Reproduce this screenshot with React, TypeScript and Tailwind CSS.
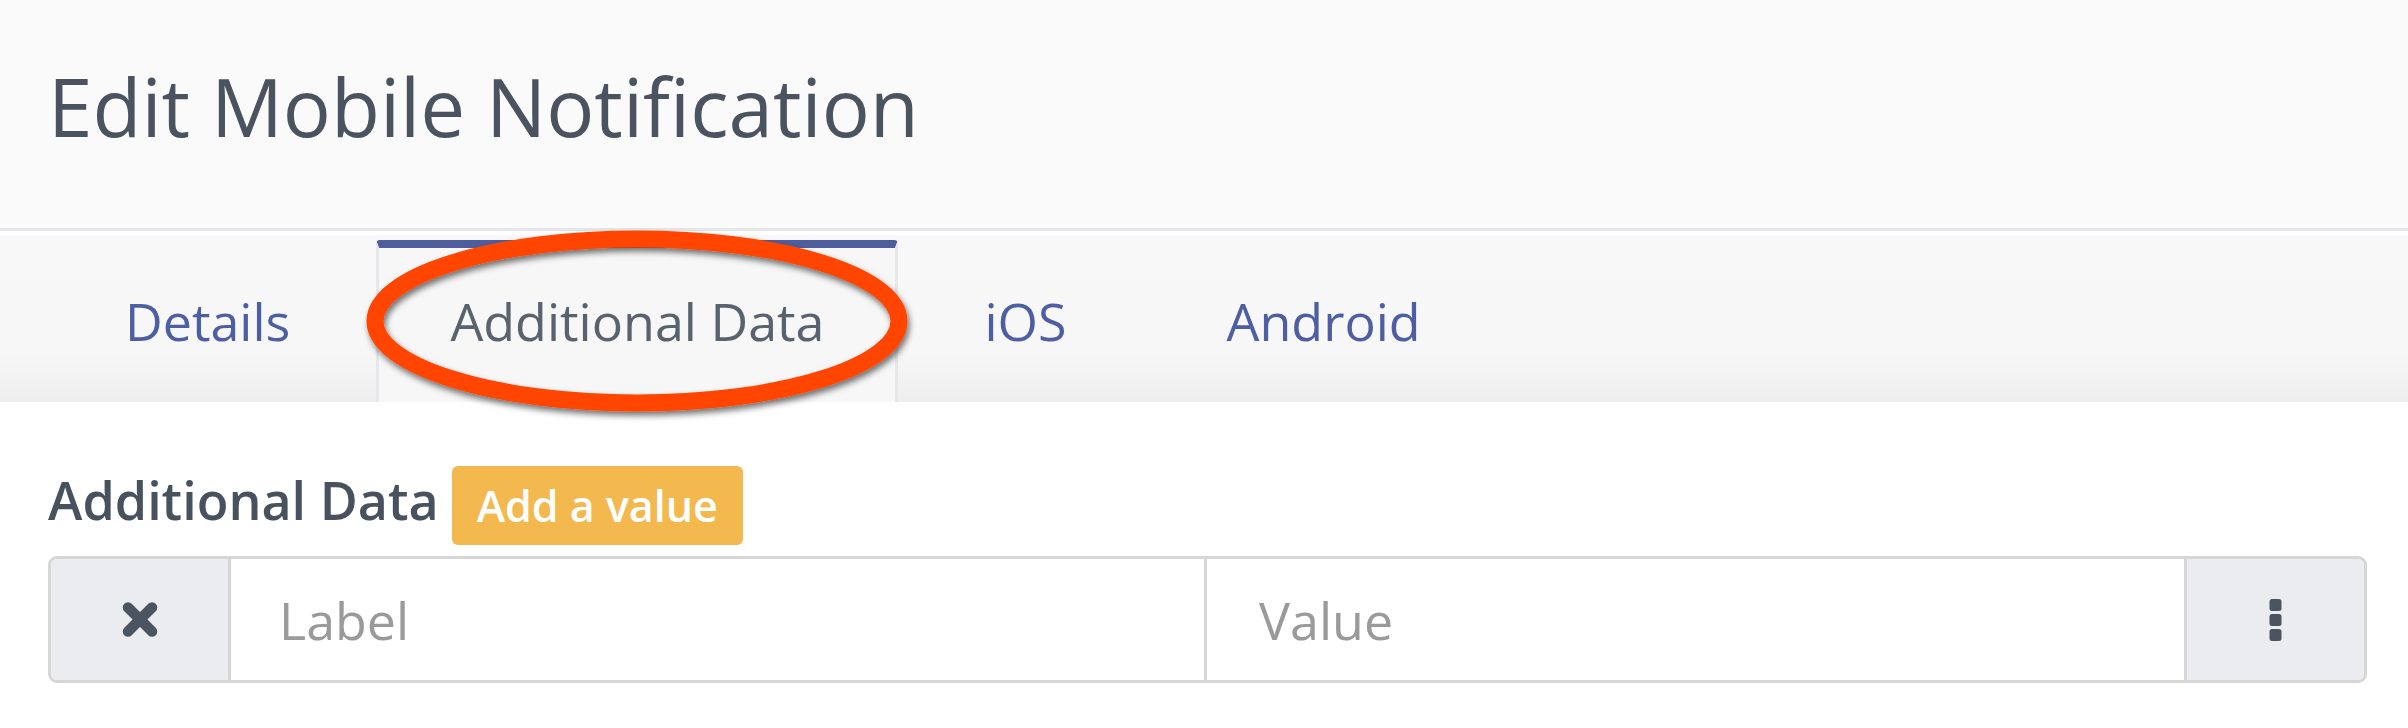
import React from "react";

const tabs = [
  { label: "Details", active: false },
  { label: "Additional Data", active: true },
  { label: "iOS", active: false },
  { label: "Android", active: false },
];

const TimesIcon = () => (
  <svg width="36" height="35" viewBox="0 0 36 35">
    <path
      d="M6 5.5 L30 29.5 M30 5.5 L6 29.5"
      stroke="#4b5461"
      strokeWidth="10.5"
      strokeLinecap="round"
      fill="none"
    />
  </svg>
);

const EllipsisIcon = () => (
  <svg width="13" height="42" viewBox="0 0 13 42">
    <rect x="0.5" y="0" width="12" height="12" rx="2.5" fill="#4b5461" />
    <rect x="0.5" y="15" width="12" height="12" rx="2.5" fill="#4b5461" />
    <rect x="0.5" y="30" width="12" height="12" rx="2.5" fill="#4b5461" />
  </svg>
);

export default function App() {
  return (
    <div className="relative w-[2408px] h-[728px] overflow-hidden bg-white font-['Open_Sans',sans-serif]">
      <header className="h-[231px] bg-[#fafafa] border-b-[3px] border-[#e5e6ea] pl-[48px] pt-[66px]">
        <h1 className="text-[80px] leading-none text-[#4a535f] font-normal">
          Edit Mobile Notification
        </h1>
      </header>
      <div className="h-[4px] bg-white" />
      <nav className="h-[167px] flex items-end gap-[12px] pl-[51px] bg-linear-to-b from-[#f8f8f8] via-[#f7f7f7] via-70% to-[#eeeeee]">
        {tabs.map((t) => (
          <div
            key={t.label}
            className={
              t.active
                ? "h-[162px] border-t-[8px] border-x-[3px] border-t-[#4e5d9c] border-x-[#e6e7eb] rounded-t-[4px] bg-[#f7f7f7] px-[71px] pt-[47px] text-[52px] leading-none text-[#59636f]"
                : "h-[162px] border-t-[8px] border-x-[3px] border-transparent px-[71px] pt-[47px] text-[52px] leading-none text-[#4e5ea2]"
            }
          >
            {t.label}
          </div>
        ))}
      </nav>
      <section className="pl-[48px] pr-[41px] pt-[64px]">
        <div className="flex items-start">
          <span className="mt-[8px] text-[52px] leading-none font-semibold text-[#48525e]">
            Additional Data
          </span>
          <button className="ml-[13px] h-[79px] px-[25px] rounded-[6px] bg-[#f3b94f] text-white text-[43px] leading-none font-semibold">
            Add a value
          </button>
        </div>
        <div className="mt-[11px] flex h-[127px] border-[3px] border-[#d6d6d6] rounded-[9px] overflow-hidden">
          <div className="w-[180px] shrink-0 flex items-center justify-center bg-[#ebecf0] border-r-[3px] border-[#d6d6d6]">
            <TimesIcon />
          </div>
          <div className="flex-1 flex items-center pl-[48px] border-r-[3px] border-[#d6d6d6] bg-white text-[52px] leading-none text-[#9a9a9a]">
            Label
          </div>
          <div className="flex-1 flex items-center pl-[52px] bg-white text-[52px] leading-none text-[#9a9a9a]">
            Value
          </div>
          <div className="w-[180px] shrink-0 flex items-center justify-center bg-[#ebecf0] border-l-[3px] border-[#d6d6d6]">
            <EllipsisIcon />
          </div>
        </div>
      </section>

      <svg
        className="absolute left-0 top-0 pointer-events-none"
        width="2408"
        height="728"
        viewBox="0 0 2408 728"
      >
        <defs>
          <filter id="annShadow" x="-10%" y="-20%" width="120%" height="140%">
            <feDropShadow dx="2" dy="4" stdDeviation="3" floodColor="#000" floodOpacity="0.55" />
          </filter>
        </defs>
        <ellipse
          cx="637"
          cy="321"
          rx="262"
          ry="82"
          fill="none"
          stroke="#ff4500"
          strokeWidth="17"
          filter="url(#annShadow)"
        />
      </svg>
    </div>
  );
}
